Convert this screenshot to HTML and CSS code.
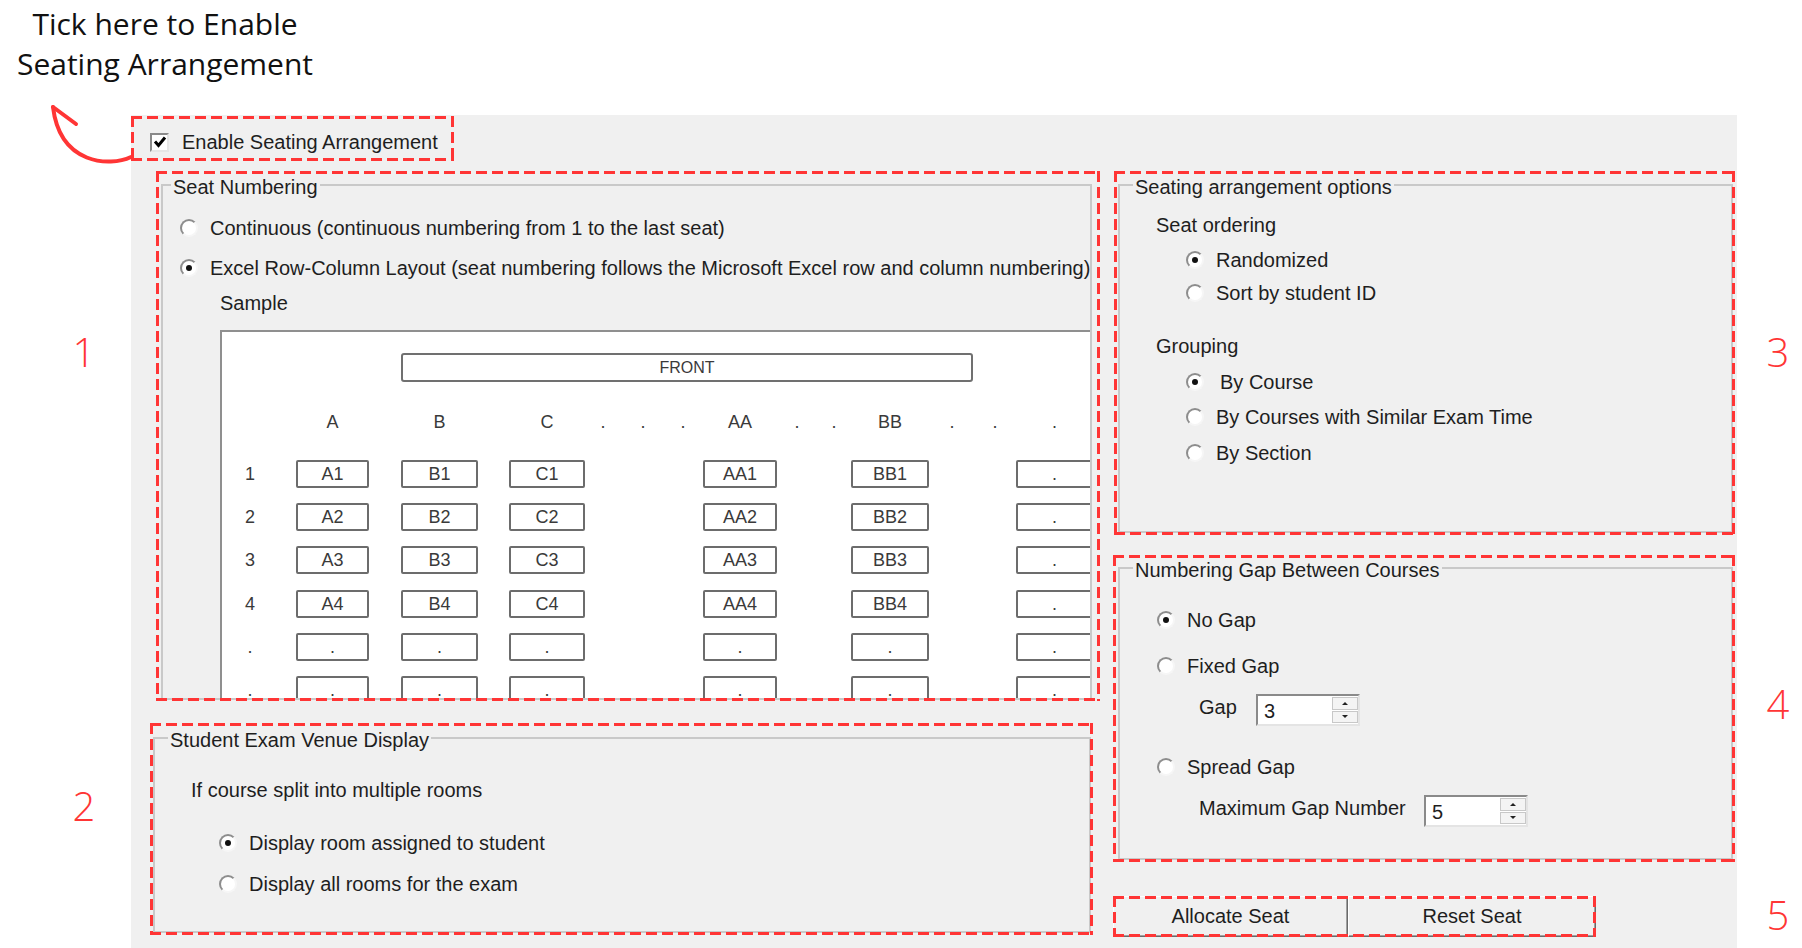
FILE: index.html
```html
<!DOCTYPE html>
<html lang="en">
<head>
<meta charset="utf-8">
<title>Seating Arrangement</title>
<link rel="stylesheet" href="styles.css">
</head>
<body>
<div class="page">
  <div class="note">Tick here to Enable<br>Seating Arrangement</div>
  <svg class="arrow" width="140" height="175" viewBox="0 0 140 175">
    <path d="M131 157 C110 167 60 165 53 107"/>
    <path d="M53 107 L76 124"/>
  </svg>

  <div class="gutter gutter-left">
    <span class="num n1">1</span>
    <span class="num n2">2</span>
  </div>

  <div class="panel">
    <div class="enable dash">
      <span class="check"><svg width="14" height="14" viewBox="0 0 14 14"><path d="M2 6.5 L5.5 10.5 L12 2.5"/></svg></span>
      <span>Enable Seating Arrangement</span>
    </div>

    <div class="columns">
      <div class="col-left">
        <div class="box box1 dash">
          <div class="group g1">
            <span class="legend lg1">Seat Numbering</span>
            <div class="opt g1-r1"><span class="radio"></span>Continuous (continuous numbering from 1 to the last seat)</div>
            <div class="opt g1-r2"><span class="radio on"></span>Excel Row-Column Layout (seat numbering follows the Microsoft Excel row and column numbering)</div>
            <div class="line g1-sample">Sample</div>
            <div class="pic">
              <div class="front">FRONT</div>
              <div class="seats">
                <span class="hd c-a">A</span>
                <span class="hd c-b">B</span>
                <span class="hd c-c">C</span>
                <span class="hd hdots z1 c-g1"><i>.</i><i>.</i><i>.</i></span>
                <span class="hd c-aa">AA</span>
                <span class="hd hdots z2 c-g2"><i>.</i><i>.</i></span>
                <span class="hd c-bb">BB</span>
                <span class="hd hdots z3 c-g3"><i>.</i><i>.</i></span>
                <span class="hd c-z">.</span>

                <span class="rl c-l">1</span>
                <span class="seat c-a">A1</span><span class="seat c-b">B1</span><span class="seat c-c">C1</span>
                <span class="seat c-aa">AA1</span><span class="seat c-bb">BB1</span><span class="seat c-z">.</span>

                <span class="rl c-l">2</span>
                <span class="seat c-a">A2</span><span class="seat c-b">B2</span><span class="seat c-c">C2</span>
                <span class="seat c-aa">AA2</span><span class="seat c-bb">BB2</span><span class="seat c-z">.</span>

                <span class="rl c-l">3</span>
                <span class="seat c-a">A3</span><span class="seat c-b">B3</span><span class="seat c-c">C3</span>
                <span class="seat c-aa">AA3</span><span class="seat c-bb">BB3</span><span class="seat c-z">.</span>

                <span class="rl c-l">4</span>
                <span class="seat c-a">A4</span><span class="seat c-b">B4</span><span class="seat c-c">C4</span>
                <span class="seat c-aa">AA4</span><span class="seat c-bb">BB4</span><span class="seat c-z">.</span>

                <span class="rl c-l">.</span>
                <span class="seat c-a">.</span><span class="seat c-b">.</span><span class="seat c-c">.</span>
                <span class="seat c-aa">.</span><span class="seat c-bb">.</span><span class="seat c-z">.</span>

                <span class="rl c-l">.</span>
                <span class="seat c-a">.</span><span class="seat c-b">.</span><span class="seat c-c">.</span>
                <span class="seat c-aa">.</span><span class="seat c-bb">.</span><span class="seat c-z">.</span>
              </div>
            </div>
          </div>
        </div>

        <div class="box box2 dash">
          <div class="group g2">
            <span class="legend lg2">Student Exam Venue Display</span>
            <div class="line g2-head">If course split into multiple rooms</div>
            <div class="opt g2-r1"><span class="radio on"></span>Display room assigned to student</div>
            <div class="opt g2-r2"><span class="radio"></span>Display all rooms for the exam</div>
          </div>
        </div>
      </div>

      <div class="col-right">
        <div class="box box3 dash">
          <div class="group g3">
            <span class="legend lg3">Seating arrangement options</span>
            <div class="line g3-h1">Seat ordering</div>
            <div class="opt g3-o g3-r1"><span class="radio on"></span>Randomized</div>
            <div class="opt g3-o g3-r2"><span class="radio"></span>Sort by student ID</div>
            <div class="line g3-h2">Grouping</div>
            <div class="opt g3-o g3-r3"><span class="radio on wide"></span>By Course</div>
            <div class="opt g3-o g3-r4"><span class="radio"></span>By Courses with Similar Exam Time</div>
            <div class="opt g3-o g3-r5"><span class="radio"></span>By Section</div>
          </div>
        </div>

        <div class="box box4 dash">
          <div class="group g4">
            <span class="legend lg4">Numbering Gap Between Courses</span>
            <div class="opt g4-o g4-r1"><span class="radio on"></span>No Gap</div>
            <div class="opt g4-o g4-r2"><span class="radio"></span>Fixed Gap</div>
            <div class="field g4-f1">
              <span class="flabel lab-gap">Gap</span>
              <span class="spin"><span class="spin-val">3</span><span class="spin-btns"><span><b class="up"></b></span><span><b class="down"></b></span></span></span>
            </div>
            <div class="opt g4-o g4-r3"><span class="radio"></span>Spread Gap</div>
            <div class="field g4-f2">
              <span class="flabel lab-max">Maximum Gap Number</span>
              <span class="spin"><span class="spin-val">5</span><span class="spin-btns"><span><b class="up"></b></span><span><b class="down"></b></span></span></span>
            </div>
          </div>
        </div>

        <div class="btns dash">
          <button class="btn btn-alloc" type="button">Allocate Seat</button>
          <button class="btn btn-reset" type="button">Reset Seat</button>
        </div>
      </div>
    </div>
  </div>

  <div class="gutter gutter-right">
    <span class="num n3">3</span>
    <span class="num n4">4</span>
    <span class="num n5">5</span>
  </div>
</div>
</body>
</html>
```

FILE: styles.css
```css
html, body {
  margin: 0;
  padding: 0;
  background: #ffffff;
  overflow: hidden;
}

.page {
  position: relative;
  width: 1802px;
  height: 948px;
  display: grid;
  grid-template-columns: 131px 1606px 65px;
  grid-template-rows: 115px 833px;
}

/* ---------- annotations ---------- */
.note {
  grid-column: 1 / 3;
  grid-row: 1;
  width: 330px;
  padding-top: 4px;
  font-family: "Open Sans", "Noto Sans", sans-serif;
  font-size: 30px;
  line-height: 40px;
  color: #111111;
  text-align: center;
}

.arrow {
  position: absolute;
  left: 0;
  top: 0;
  fill: none;
  stroke: #ff3535;
  stroke-width: 4;
  stroke-linecap: round;
  stroke-linejoin: round;
}

.gutter {
  grid-row: 2;
  display: flex;
  flex-direction: column;
}
.gutter-left { grid-column: 1; }
.gutter-right { grid-column: 3; }

.num {
  display: block;
  width: 40px;
  font-family: "Open Sans", "Noto Sans", sans-serif;
  font-weight: 300;
  font-size: 40px;
  line-height: 40px;
  color: #ff3535;
  text-align: center;
}
.gutter-left .num { margin-left: 64px; }
.gutter-right .num { margin-left: 21px; }
.n1 { margin-top: 217px; }
.n2 { margin-top: 414px; }
.n3 { margin-top: 217px; }
.n4 { margin-top: 312px; }
.n5 { margin-top: 171px; }

/* dashed red annotation frames */
.dash { position: relative; box-sizing: border-box; }
.dash::after {
  content: "";
  position: absolute;
  inset: 0;
  pointer-events: none;
  background:
    linear-gradient(90deg, #ff3535 11px, transparent 11px) 0 0 / 16px 3px repeat-x,
    linear-gradient(90deg, #ff3535 11px, transparent 11px) 0 100% / 16px 3px repeat-x,
    linear-gradient(180deg, #ff3535 11px, transparent 11px) 0 0 / 3px 16px repeat-y,
    linear-gradient(180deg, #ff3535 11px, transparent 11px) 100% 0 / 3px 16px repeat-y;
}

/* ---------- window panel ---------- */
.panel {
  grid-column: 2;
  grid-row: 2;
  background: #f0f0f0;
  padding-top: 1px;
  box-sizing: border-box;
  font-family: "Liberation Sans", Arial, sans-serif;
  font-size: 20px;
  color: #1e1e1e;
}

.enable {
  width: 323px;
  height: 45px;
  display: flex;
  align-items: center;
  padding: 0 0 0 19px;
  line-height: 24px;
}
.enable > span:last-child { margin-left: 13px; margin-top: 7px; }

.check {
  width: 19px;
  height: 19px;
  box-sizing: border-box;
  margin-top: 7px;
  border: 2px solid;
  border-color: #8a8a8a #e6e6e6 #e6e6e6 #8a8a8a;
  background: #ffffff;
  display: flex;
  align-items: center;
  justify-content: center;
}
.check svg { fill: none; stroke: #000; stroke-width: 3; }

.columns {
  display: flex;
  gap: 13px;
  margin-top: 10px;
  padding-left: 19px;
}

.col-left, .col-right {
  display: flex;
  flex-direction: column;
  align-items: flex-start;
}
.col-left { width: 950px; }
.col-right { width: 622px; }

.box1 { margin-left: 6px; width: 944px; height: 530px; padding: 13px 0 0 5px; }
.box2 { margin-top: 22px; width: 943px; height: 212px; padding: 14px 0 0 3px; }
.box3 { margin-left: 1px; width: 621px; height: 364px; padding: 13px 0 0 4px; }
.box4 { margin-top: 20px; width: 622px; height: 307px; padding: 12px 0 0 5px; }

.group {
  position: relative;
  box-sizing: border-box;
  border: 2px solid #c9c9c9;
}
.g1 { width: 931px; height: 516px; }
.g2 { width: 938px; height: 196px; }
.g3 { width: 615px; height: 349px; }
.g4 { width: 615px; height: 293px; }

.legend {
  position: absolute;
  top: -11px;
  left: 13px;
  padding: 0 2px;
  background: #f0f0f0;
  line-height: 24px;
  white-space: nowrap;
}
.lg1 { left: 8px; }

.line { line-height: 24px; white-space: nowrap; }

.opt {
  display: flex;
  align-items: center;
  height: 24px;
  line-height: 24px;
  white-space: nowrap;
}

.radio {
  position: relative;
  flex: none;
  width: 18px;
  height: 18px;
  box-sizing: border-box;
  margin-right: 12px;
  border-radius: 50%;
  border: 2px solid;
  border-color: #8d8d8d #f6f6f6 #f6f6f6 #8d8d8d;
  background: #ffffff;
}
.radio.on::after {
  content: "";
  position: absolute;
  left: 4px;
  top: 4px;
  width: 6px;
  height: 6px;
  border-radius: 50%;
  background: #111111;
}
.radio.wide { margin-right: 16px; }

/* group 1 */
.g1-r1 { margin: 30px 0 0 17px; }
.g1-r2 { margin: 16px 0 0 17px; }
.g1-sample { margin: 11px 0 0 57px; }

.pic {
  margin: 15px 0 0 57px;
  height: 368px;
  box-sizing: border-box;
  border-top: 2px solid #8f8f8f;
  border-left: 2px solid #8f8f8f;
  background: #ffffff;
  overflow: hidden;
  font-size: 18px;
  color: #3a3a3a;
}

.front {
  margin: 21px 0 0 179px;
  width: 572px;
  height: 29px;
  box-sizing: border-box;
  border: 2px solid #707070;
  border-radius: 3px;
  text-align: center;
  font-size: 16px;
  line-height: 25px;
}

.seats {
  display: grid;
  margin-top: 26px;
  width: 871px;
  grid-template-columns: 14px 28px 32px 73px 32px 77px 31px 76px 118px 74px 74px 78px 87px 77px;
  grid-template-rows: 36.8px repeat(6, 28px);
  row-gap: 15.2px;
}

.c-l { grid-column: 2; }
.c-a { grid-column: 4; }
.c-b { grid-column: 6; }
.c-c { grid-column: 8; }
.c-g1 { grid-column: 9; }
.c-aa { grid-column: 10; }
.c-g2 { grid-column: 11; }
.c-bb { grid-column: 12; }
.c-g3 { grid-column: 13; }
.c-z { grid-column: 14; }

.hd {
  align-self: start;
  height: 28px;
  line-height: 28px;
  text-align: center;
}
.hdots {
  display: flex;
  justify-content: space-between;
}
.hdots i { font-style: normal; }
.z1 { padding: 0 17.5px 0 15.5px; }
.z2 { padding: 0 14.5px 0 17.5px; }
.z3 { padding: 0 18.5px 0 20.5px; }

.rl {
  line-height: 28px;
  text-align: center;
}

.seat {
  height: 28px;
  box-sizing: border-box;
  border: 2px solid #6c6c6c;
  border-radius: 2px;
  text-align: center;
  line-height: 24px;
}

/* group 2 */
.g2-head { margin: 39px 0 0 36px; }
.g2-r1 { margin: 29px 0 0 64px; }
.g2-r2 { margin: 17px 0 0 64px; }

/* group 3 */
.g3-h1 { margin: 27px 0 0 36px; }
.g3-o { margin-left: 66px; }
.g3-r1 { margin-top: 11px; }
.g3-r2 { margin-top: 9px; }
.g3-h2 { margin: 29px 0 0 36px; }
.g3-r3 { margin-top: 12px; }
.g3-r4 { margin-top: 11px; }
.g3-r5 { margin-top: 12px; }

/* group 4 */
.g4-o { margin-left: 37px; }
.g4-r1 { margin-top: 39px; }
.g4-r2 { margin-top: 22px; }
.g4-r3 { margin-top: 29px; }

.field {
  display: flex;
  align-items: flex-start;
  height: 32px;
  margin-left: 79px;
}
.g4-f1 { margin-top: 16px; }
.g4-f2 { margin-top: 16px; }

.flabel {
  margin-top: 1px;
  line-height: 24px;
  white-space: nowrap;
}
.lab-gap { width: 57px; }
.lab-max { width: 225px; }

.spin {
  display: flex;
  width: 104px;
  height: 32px;
  box-sizing: border-box;
  border: 2px solid;
  border-color: #8a8a8a #e4e4e4 #e4e4e4 #8a8a8a;
  background: #ffffff;
}
.spin-val {
  flex: 1;
  padding-left: 6px;
  line-height: 30px;
}
.spin-btns {
  width: 26px;
  display: flex;
  flex-direction: column;
  padding: 1px 0;
  box-sizing: border-box;
}
.spin-btns > span {
  flex: 1;
  display: flex;
  align-items: center;
  justify-content: center;
  background: #f4f4f4;
  border: 1px solid #c8c8c8;
}
.spin-btns > span + span { margin-top: 1px; }
.up, .down {
  width: 0;
  height: 0;
  border-left: 3px solid transparent;
  border-right: 3px solid transparent;
}
.up { border-bottom: 3px solid #222; }
.down { border-top: 3px solid #222; }

/* buttons */
.btns {
  display: flex;
  margin-top: 34px;
  width: 483px;
  height: 41px;
}
.btn {
  margin: 0;
  padding: 0;
  height: 41px;
  box-sizing: border-box;
  font-family: inherit;
  font-size: inherit;
  color: #1e1e1e;
  background: #f0f0f0;
  border: 1px solid;
  border-color: #ffffff #6a6a6a #6a6a6a #ffffff;
  box-shadow: inset -1px -1px 0 #a0a0a0;
  line-height: 39px;
}
.btn-alloc { width: 235px; }
.btn-reset { width: 248px; }
```
